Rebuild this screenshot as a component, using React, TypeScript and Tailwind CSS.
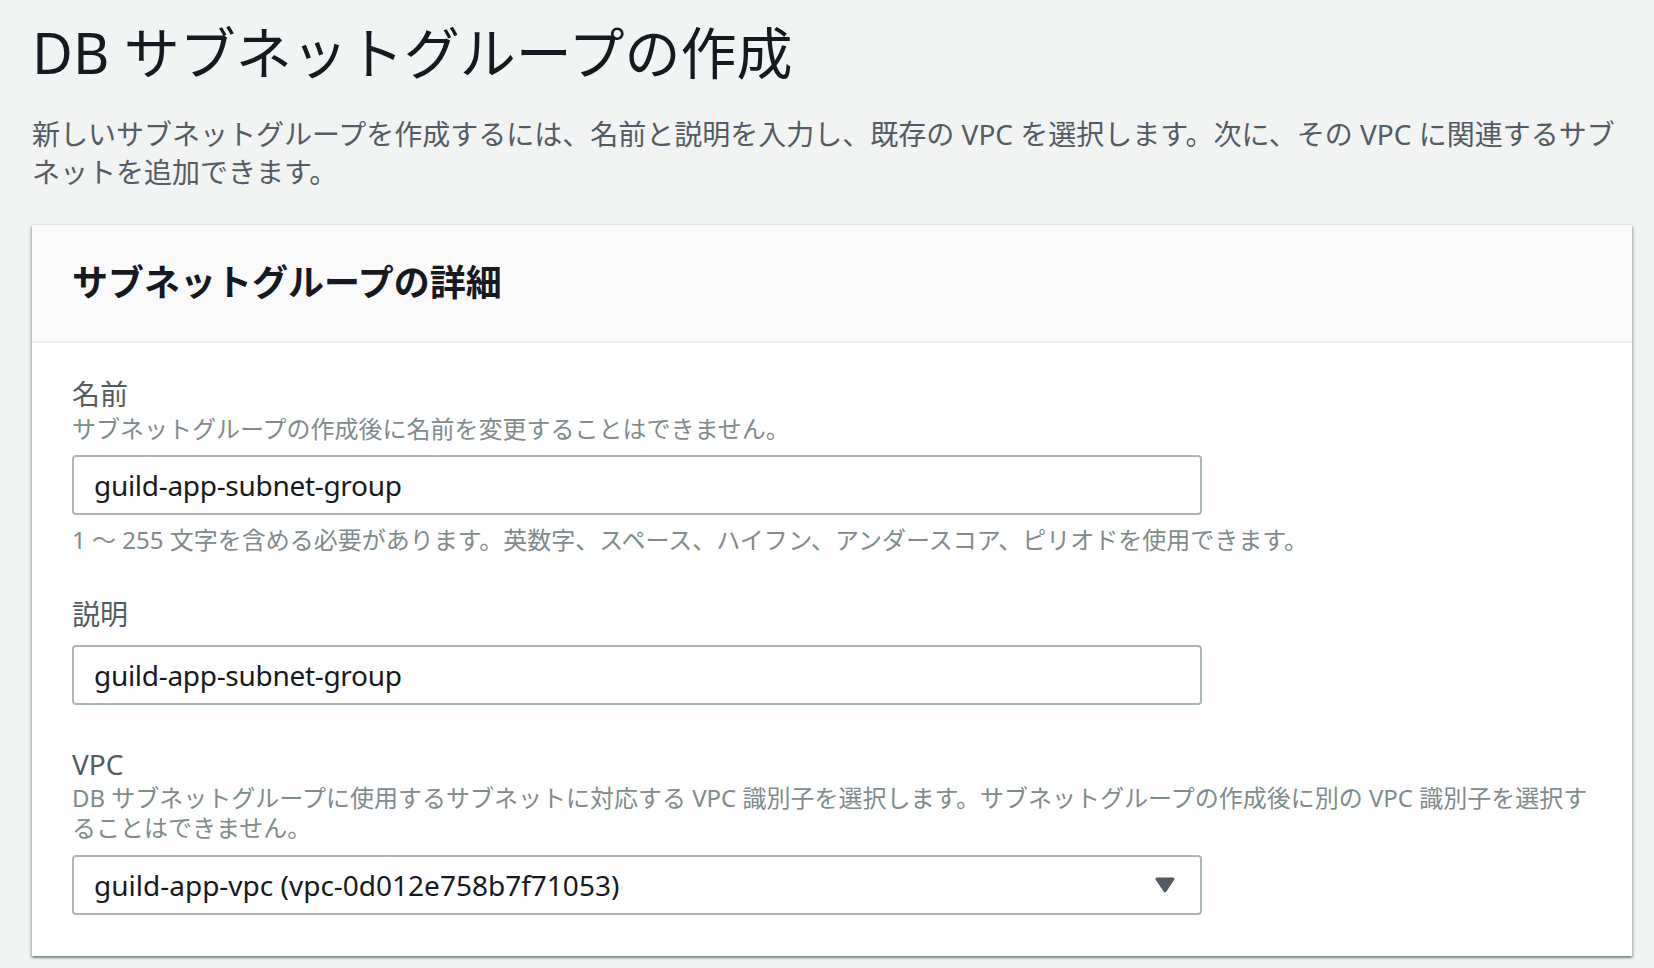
import React from 'react';

// RDS コンソール: DB サブネットグループの作成
const FONT = "font-['Noto_Sans','Noto_Sans_CJK_JP',sans-serif]";

const Caret = () => (
  <svg width="20" height="16" viewBox="0 0 20 16" className="shrink-0">
    <polygon points="2,2 18,2 10,14" fill="#545b64" stroke="#545b64" strokeWidth="3" strokeLinejoin="round" />
  </svg>
);

const TextInput = ({ value }: { value: string }) => (
  <input
    type="text"
    readOnly
    defaultValue={value}
    className="block w-[1130px] h-[60px] border-2 border-[#aab7b8] rounded-[4px] bg-white pl-[20px] pr-[20px] text-[28px] tracking-[-0.3px] text-[#16191f] outline-none"
  />
);

export default function App() {
  return (
    <div className={`min-h-screen bg-[#f2f3f3] ${FONT} pb-[14px]`}>
      <div className="pl-[32px] pt-[20px] w-[1632px]">
        <h1 className="text-[56px] leading-[64px] font-normal text-[#16191f]">DB サブネットグループの作成</h1>
        <p className="mt-[31px] text-[28px] leading-[38px] text-[#545b64]">
          新しいサブネットグループを作成するには、名前と説明を入力し、既存の VPC を選択します。次に、その VPC に関連するサブ<br />
          ネットを追加できます。
        </p>

        <div className="mt-[34px] w-[1600px] bg-white shadow-[0_2px_2px_0_rgba(0,28,36,0.3),2px_2px_2px_0_rgba(0,28,36,0.15),-2px_2px_2px_0_rgba(0,28,36,0.15),0_-1px_1px_0_rgba(0,28,36,0.08)]">
          {/* ヘッダー */}
          <div className="h-[118px] bg-[#fafafa] border-b-2 border-[#eaeded] px-[40px] flex items-center">
            <h2 className="text-[36px] leading-[44px] font-bold text-[#16191f]">サブネットグループの詳細</h2>
          </div>

          {/* フォーム */}
          <div className="px-[40px] pt-[33px] pb-[41px]">
            {/* 名前 */}
            <div>
              <div className="text-[28px] leading-[36px] text-[#545b64]">名前</div>
              <div className="mt-[2px] text-[24px] leading-[30px] text-[#7f8b8c]">サブネットグループの作成後に名前を変更することはできません。</div>
              <div className="mt-[11px]">
                <TextInput value="guild-app-subnet-group" />
              </div>
              <div className="mt-[10px] text-[24px] leading-[30px] text-[#7f8b8c]">
                1 ～ 255 文字を含める必要があります。英数字、スペース、ハイフン、アンダースコア、ピリオドを使用できます。
              </div>
            </div>

            {/* 説明 */}
            <div className="mt-[41px]">
              <div className="text-[28px] leading-[36px] text-[#545b64]">説明</div>
              <div className="mt-[13px]">
                <TextInput value="guild-app-subnet-group" />
              </div>
            </div>

            {/* VPC */}
            <div className="mt-[41px]">
              <div className="text-[28px] leading-[36px] text-[#545b64]">VPC</div>
              <div className="mt-[1px] text-[24px] leading-[30px] text-[#7f8b8c]">
                DB サブネットグループに使用するサブネットに対応する VPC 識別子を選択します。サブネットグループの作成後に別の VPC 識別子を選択す<br />
                ることはできません。
              </div>
              <div className="mt-[12px] w-[1130px] h-[60px] border-2 border-[#aab7b8] rounded-[4px] bg-white pl-[20px] pr-[25px] flex items-center justify-between">
                <span className="text-[28px] text-[#16191f]">guild-app-vpc (vpc-0d012e758b7f71053)</span>
                <Caret />
              </div>
            </div>
          </div>
        </div>
      </div>
    </div>
  );
}
